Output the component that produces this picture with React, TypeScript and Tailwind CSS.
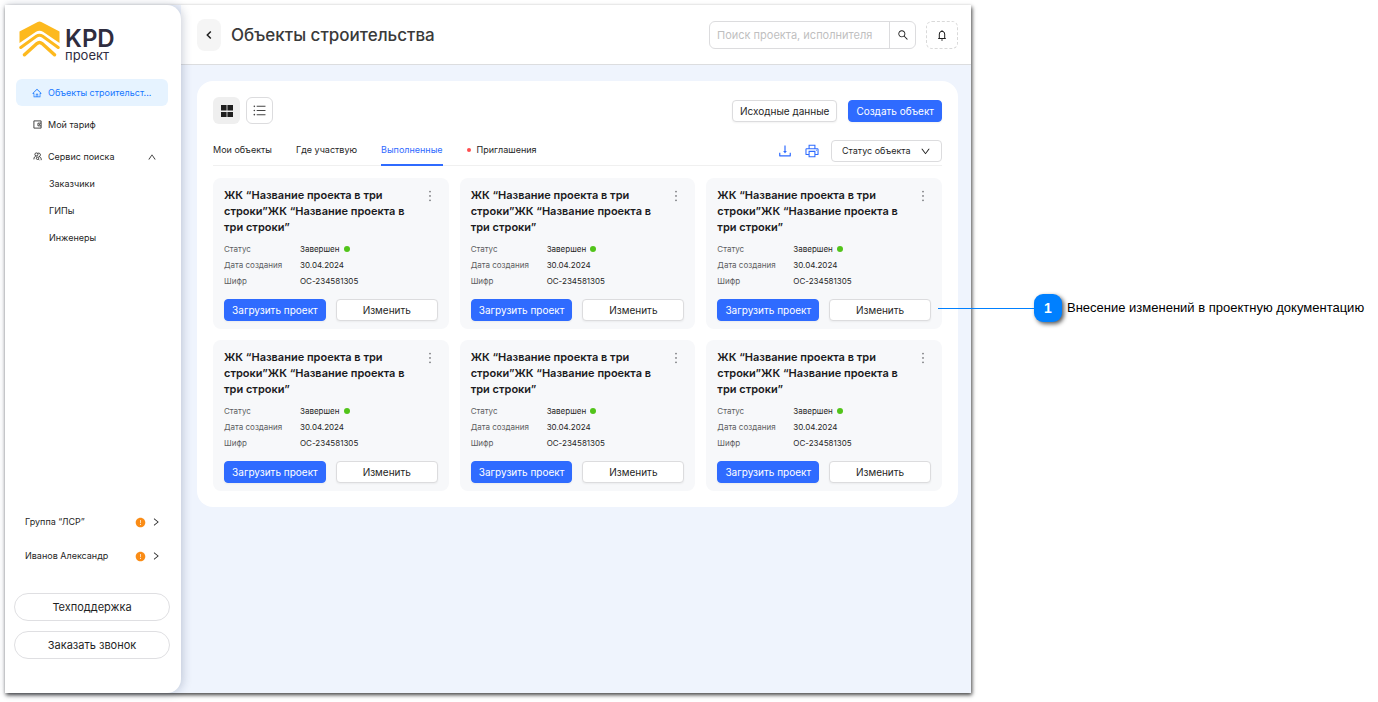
import type { ReactNode } from "react";
import {
  AiFillExclamationCircle,
  AiOutlineDown,
  AiOutlineDownload,
  AiOutlineHome,
  AiOutlineMore,
  AiOutlinePrinter,
  AiOutlineRight,
  AiOutlineSearch,
  AiOutlineUnorderedList,
  AiOutlineUp,
} from "react-icons/ai";

const projects = Array.from({ length: 6 }, (_, i) => ({
  id: i + 1,
  title: "ЖК “Название проекта в три строки”ЖК “Название проекта в три строки”",
  status: "Завершен",
  created: "30.04.2024",
  code: "ОС-234581305",
}));

const tabs = [
  { label: "Мои объекты" },
  { label: "Где участвую" },
  { label: "Выполненные", active: true },
  { label: "Приглашения", dot: true },
];

const searchLinks = ["Заказчики", "ГИПы", "Инженеры"];
const accounts = ["Группа “ЛСР”", "Иванов Александр"];

function Logo() {
  return (
    <a href="#" aria-label="KPD проект" className="flex items-start text-[#2f2d3f]">
      <svg viewBox="0 0 41 36" className="h-9 w-[41px]" aria-hidden="true">
        <path
          d="M.5 10.5 18.7.9q1.8-.9 3.6 0l18.2 9.6V22L24 10.800q-3.500-2.200-7 0L.5 22z"
          fill="#fdb91e"
        />
        <path
          d="M1.800 26.500 17.300 15.300q3.200-2.200 6.400 0L39.200 26.500"
          fill="none"
          stroke="#fdb91e"
          strokeWidth="3"
          strokeLinecap="round"
        />
        <path
          d="M5.500 33.800 17.900 22.600q2.600-2.200 5.200 0L35.500 33.800"
          fill="none"
          stroke="#fdb91e"
          strokeWidth="3.400"
          strokeLinecap="round"
        />
      </svg>
      <span className="ml-[5px] flex flex-col pt-2">
        <span className="text-2xl leading-5 font-semibold">KPD</span>
        <span className="text-[13px] leading-3">проект</span>
      </span>
    </a>
  );
}

function WalletIcon() {
  return (
    <svg viewBox="0 0 10 10" className="h-[9px] w-[9px]" fill="none" stroke="currentColor" aria-hidden="true">
      <path d="M1 1h8v8H1zM9 3.500H5.500v3H9M6.800 5h1" strokeWidth="0.900" />
    </svg>
  );
}

function PeopleIcon() {
  return (
    <svg viewBox="0 0 10 10" className="h-[9px] w-[9px]" fill="none" stroke="currentColor" aria-hidden="true">
      <circle cx="3.800" cy="2.700" r="1.700" strokeWidth="0.900" />
      <path
        d="M1 8.200c0-2.400 1-3.600 2.800-3.600M5.200 1.400c2-.6 3.300.4 3 2-.2 1.200-1 1.600-1.800 1.700M6.500 5.100C8.300 5.200 9.200 6.500 9.200 9"
        strokeWidth="0.900"
      />
      <circle cx="5" cy="7" r="1.300" strokeWidth="0.900" />
      <path d="m6 8 1.200 1.200" strokeWidth="0.900" />
    </svg>
  );
}

function BellIcon() {
  return (
    <svg viewBox="0 0 12 12" className="h-3 w-3" fill="none" stroke="currentColor" aria-hidden="true">
      <path d="M3.300 9.500V5a2.700 2.700 0 0 1 5.400 0v4.500M2.200 9.500h7.600M6 2.300V1.200M5.200 11h1.600" strokeWidth="1" />
    </svg>
  );
}

function GridIcon() {
  return (
    <svg viewBox="0 0 12 12" className="h-3 w-3" fill="currentColor" aria-hidden="true">
      <path d="M0 0h5.600v5.600H0zM6.400 0H12v5.600H6.400zM0 6.900h5.600v5.100H0zM6.400 6.900H12v5.100H6.400z" />
    </svg>
  );
}

function Button({ primary, children }: { primary?: boolean; children: ReactNode }) {
  return (
    <button
      type="button"
      className={`h-[22px] rounded border px-[7px] text-[10px] leading-4 whitespace-nowrap shadow-xs ${
        primary ? "border-[#2f6bff] bg-[#2f6bff] text-white" : "border-[#dcdcde] bg-white text-[#1f1f1f]"
      }`}
    >
      {children}
    </button>
  );
}

function Sidebar() {
  return (
    <aside className="z-10 flex w-44 shrink-0 flex-col rounded-r-[14px] bg-white text-[9px] shadow-[2px_0_10px_rgba(30,50,90,0.22)]">
      <div className="pt-4 pl-[14px]">
        <Logo />
      </div>
      <nav className="mt-[18px] flex flex-col gap-[5px] pr-[13px] pl-[11px]">
        <a
          href="#"
          title="Объекты строительства"
          className="flex h-[27px] items-center gap-[6px] rounded-md bg-[#e6f3ff] pl-4 whitespace-nowrap text-[#1677ff]"
        >
          <AiOutlineHome className="h-[10px] w-[10px] shrink-0" />
          Объекты строительст...
        </a>
        <a href="#" className="flex h-[27px] items-center gap-[6px] px-[17px]">
          <WalletIcon />
          Мой тариф
        </a>
        <div className="flex flex-col">
          <button type="button" aria-expanded="true" className="flex h-[27px] items-center gap-[6px] pr-[11px] pl-[17px]">
            <PeopleIcon />
            Сервис поиска
            <AiOutlineUp className="ml-auto h-[10px] w-[10px]" />
          </button>
          {searchLinks.map((label) => (
            <a key={label} href="#" className="flex h-[27px] items-center pl-[33px]">
              {label}
            </a>
          ))}
        </div>
      </nav>
      <div className="mt-auto flex flex-col gap-[6px] pr-5 pl-5">
        {accounts.map((name) => (
          <a key={name} href="#" className="flex h-7 items-center">
            {name}
            <AiFillExclamationCircle className="mr-[5px] ml-auto h-[11px] w-[11px] text-[#fa8c16]" />
            <AiOutlineRight className="h-[10px] w-[10px]" />
          </a>
        ))}
      </div>
      <div className="mt-[23px] flex flex-col gap-[10px] pr-[11px] pb-[34px] pl-[9px] text-[11px]">
        <button type="button" className="h-7 rounded-full border border-[#dfdfe2]">
          Техподдержка
        </button>
        <button type="button" className="h-7 rounded-full border border-[#dfdfe2]">
          Заказать звонок
        </button>
      </div>
    </aside>
  );
}

function Header() {
  return (
    <header className="flex h-[60px] items-center border-b border-[#dcdddf] bg-white pt-px pr-[13px] pl-4">
      <button
        type="button"
        aria-label="Назад"
        className="flex h-8 w-6 items-center justify-center rounded-lg bg-[#f5f5f5]"
      >
        <svg viewBox="0 0 8 10" className="h-[10px] w-2" fill="none" stroke="currentColor" aria-hidden="true">
          <path d="M5.800 1.500 2.300 5l3.500 3.500" strokeWidth="1.500" />
        </svg>
      </button>
      <h1 className="ml-[10px] text-[17px] leading-6 font-medium text-[#3a3a3a]">Объекты строительства</h1>
      <form className="ml-auto flex h-7 w-[207px] rounded-md border border-[#dcdcde]">
        <input
          type="text"
          aria-label="Поиск проекта, исполнителя"
          placeholder="Поиск проекта, исполнителя"
          className="min-w-0 flex-1 px-[7px] text-[11px] outline-none placeholder:text-[#bfbfbf]"
        />
        <button
          type="button"
          aria-label="Найти"
          className="flex w-[26px] items-center justify-center border-l border-[#dcdcde]"
        >
          <AiOutlineSearch className="h-3 w-3" />
        </button>
      </form>
      <button
        type="button"
        aria-label="Уведомления"
        className="ml-[10px] flex h-7 w-8 items-center justify-center rounded-md border border-dashed border-[#d9d9d9]"
      >
        <BellIcon />
      </button>
    </header>
  );
}

function ProjectCard({ project }: { project: (typeof projects)[number] }) {
  return (
    <article className="rounded-lg bg-[#f7f8fa] px-[11px] pt-[9px] pb-2">
      <div className="flex items-start justify-between">
        <h2 className="w-[190px] text-[11px] leading-4 font-semibold text-[#1b1b1d]">{project.title}</h2>
        <button type="button" aria-label="Меню" className="pt-px text-[#77787c]">
          <AiOutlineMore className="h-4 w-4" />
        </button>
      </div>
      <dl className="mt-[6px] grid grid-cols-[76px_1fr] text-[8px] leading-4">
        <dt className="text-[#5c5d61]">Статус</dt>
        <dd className="flex items-center gap-1">
          {project.status}
          <span className="h-[6px] w-[6px] rounded-full bg-[#52c41a]" />
        </dd>
        <dt className="text-[#5c5d61]">Дата создания</dt>
        <dd>{project.created}</dd>
        <dt className="text-[#5c5d61]">Шифр</dt>
        <dd>{project.code}</dd>
      </dl>
      <div className="mt-[10px] grid grid-cols-2 gap-[10px]">
        <Button primary>Загрузить проект</Button>
        <Button>Изменить</Button>
      </div>
    </article>
  );
}

function Objects() {
  return (
    <section className="mt-4 mr-[13px] mb-4 ml-4 rounded-2xl bg-white p-4">
      <div className="flex items-center">
        <button
          type="button"
          aria-label="Плитка"
          className="flex h-[27px] w-[27px] items-center justify-center rounded-md bg-[#efefef]"
        >
          <GridIcon />
        </button>
        <button
          type="button"
          aria-label="Список"
          className="ml-[6px] flex h-[27px] w-[27px] items-center justify-center rounded-md border border-[#dcdcde] text-[#444]"
        >
          <AiOutlineUnorderedList className="h-[15px] w-[15px]" />
        </button>
        <div className="ml-auto flex gap-[11px]">
          <Button>Исходные данные</Button>
          <Button primary>Создать объект</Button>
        </div>
      </div>
      <div className="mt-3 flex h-[30px] items-stretch border-b border-[#f0f0f0] text-[9px]">
        <nav className="-mb-px flex gap-6">
          {tabs.map((tab) => (
            <a
              key={tab.label}
              href="#"
              className={`flex items-center gap-[6px] border-b-2 ${
                tab.active ? "border-[#2f6bff] text-[#2f6bff]" : "border-transparent"
              }`}
            >
              {tab.dot && <span className="h-1 w-1 rounded-full bg-[#ff4d4f]" />}
              {tab.label}
            </a>
          ))}
        </nav>
        <div className="ml-auto flex items-center gap-[11px] text-[#2f6bff]">
          <button type="button" aria-label="Скачать">
            <AiOutlineDownload className="h-4 w-4" />
          </button>
          <button type="button" aria-label="Печать">
            <AiOutlinePrinter className="h-4 w-4" />
          </button>
          <div className="relative text-[#1f1f1f]">
            <select
              aria-label="Статус объекта"
              className="block h-[22px] w-[111px] appearance-none rounded border border-[#dcdcde] bg-white pl-[10px]"
            >
              <option>Статус объекта</option>
            </select>
            <AiOutlineDown className="pointer-events-none absolute top-[6px] right-[11px] h-[11px] w-[11px]" />
          </div>
        </div>
      </div>
      <div className="mt-3 grid grid-cols-3 gap-[11px]">
        {projects.map((project) => (
          <ProjectCard key={project.id} project={project} />
        ))}
      </div>
    </section>
  );
}

export default function App() {
  return (
    <div className="flex min-h-screen bg-white px-[5px] pt-[5px] pb-[9px] font-['Inter',sans-serif] text-[#1f1f1f]">
      <div className="flex flex-1 bg-[#eff4fd] shadow-[1px_2px_4px_rgba(0,0,0,0.75)]">
        <Sidebar />
        <main className="min-w-0 flex-1">
          <Header />
          <Objects />
        </main>
      </div>
      <aside className="z-10 w-[402px] shrink-0 pt-[289px] pl-[63px]">
        <p className="relative flex items-center gap-[5px] font-['Liberation_Sans',sans-serif] text-[13px] whitespace-nowrap text-black">
          <span className="absolute top-1/2 right-full h-px w-24 bg-[#0080ff]" />
          <span className="flex h-7 w-7 shrink-0 items-center justify-center rounded-[9px] bg-[#0080ff] text-sm font-bold text-white shadow-[2px_2px_4px_rgba(0,0,0,0.65)]">
            1
          </span>
          Внесение изменений в проектную документацию
        </p>
      </aside>
    </div>
  );
}
